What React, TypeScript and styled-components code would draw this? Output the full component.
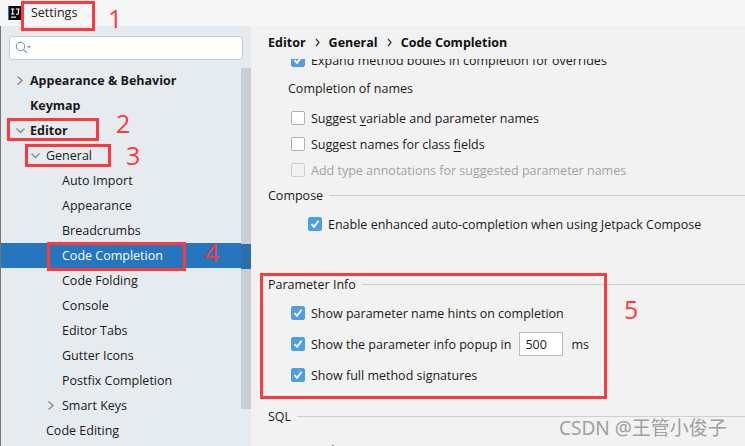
import React from "react";
import styled, { createGlobalStyle } from "styled-components";

const Global = createGlobalStyle`
  html, body { margin: 0; padding: 0; background: #f2f2f2; }
  #root { width: 745px; height: 446px; overflow: hidden; }
  * { box-sizing: border-box; }
`;

const font = `"Open Sans", "Noto Sans", "Noto Sans CJK SC", sans-serif`;

const Win = styled.div`
  position: relative; width: 745px; height: 446px; overflow: hidden;
  display: flex; flex-direction: column;
  font-family: ${font}; font-size: 12.5px; color: #1a1a1a; background: #f2f2f2;
`;
const TitleBar = styled.div`
  height: 26px; flex: none; display: flex; align-items: center; gap: 9px; padding-left: 8px;
  background: #f6f6f6;
`;
const TitleText = styled.span`color: #222; margin-bottom: 1px;`;
const Body = styled.div`flex: 1; display: flex; min-height: 0;`;

const Side = styled.aside`
  width: 251px; flex: none; background: #e6ebf0; border-left: 1px solid #777;
  padding: 10px 0 0; display: flex; flex-direction: column; position: relative;
`;
const Search = styled.div`
  width: 234px; height: 24px; margin-left: 8px; flex: none; background: #fff;
  border: 1px solid #c9ccd0; border-radius: 3px; display: flex; align-items: center; padding-left: 5px;
`;
const Tree = styled.div`margin-top: 8px; display: flex; flex-direction: column;`;
const Row = styled.div<{ $indent: number; $sel?: boolean; $bold?: boolean }>`
  height: 25px; flex: none; display: flex; align-items: center; position: relative;
  padding-left: ${p => p.$indent}px;
  background: ${p => (p.$sel ? "#2675bf" : "transparent")};
  color: ${p => (p.$sel ? "#fff" : "#1a1a1a")};
  font-weight: ${p => (p.$bold ? 700 : 400)};
`;
const Arrow = styled.svg<{ $left: number }>`
  position: absolute; left: ${p => p.$left}px; top: 8px; width: 9px; height: 9px;
  fill: none; stroke: #8a8a8a; stroke-width: 1.4;
`;
const ScrollThumb = styled.div`
  position: absolute; left: 240px; top: 42px; width: 10px; height: 341px; background: #c9ced4;
`;
const SelOverlay = styled.div`
  position: absolute; left: 240px; top: 218px; width: 10px; height: 25px; background: #2d6fae;
`;

const Main = styled.main`flex: 1; display: flex; flex-direction: column; padding-left: 17px; min-width: 0;`;
const Crumbs = styled.div`
  height: 33px; flex: none; display: flex; align-items: center; gap: 7px; font-weight: 700; color: #111;
`;
const Sep = styled.svg`width: 7px; height: 9px; fill: none; stroke: #333; stroke-width: 1.2; margin: 0 1px;`;
const Content = styled.div`position: relative; flex: 1; overflow: hidden;`;
const Clip = styled.div`margin-top: -7px; display: flex; flex-direction: column;`;

const CheckRow = styled.div<{ $indent: number; $h?: number; $mt?: number; $dis?: boolean }>`
  height: ${p => p.$h ?? 20}px; flex: none; display: flex; align-items: center; gap: 6px;
  margin-top: ${p => p.$mt ?? 0}px;
  padding-left: ${p => p.$indent}px; color: ${p => (p.$dis ? "#a3a3a3" : "#1a1a1a")};
`;
const Box = styled.span<{ $on?: boolean; $dis?: boolean }>`
  width: 14px; height: 14px; flex: none; border-radius: 2px; display: flex; align-items: center; justify-content: center;
  background: ${p => (p.$on ? "#4f9ee3" : p.$dis ? "#f2f2f2" : "#fff")};
  border: 1px solid ${p => (p.$on ? "#4f9ee3" : p.$dis ? "#d0d0d0" : "#b0b0b0")};
`;
const Plain = styled.div<{ $indent: number; $mt: number }>`
  height: 20px; flex: none; display: flex; align-items: center; padding-left: ${p => p.$indent}px;
  margin-top: ${p => p.$mt}px;
`;
const SectionHead = styled.div<{ $mt: number }>`
  height: 20px; flex: none; display: flex; align-items: center; gap: 6px; margin-top: ${p => p.$mt}px;
  &::after { content: ""; flex: 1; height: 1px; background: #cfcfcf; }
`;
const NumInput = styled.span`
  width: 44px; height: 24px; background: #fff; border: 1px solid #bdbdbd; display: inline-flex; align-items: center;
  padding-left: 5px; margin-left: 2px; margin-right: 2px; flex: none;
`;
const U = styled.span`text-decoration: underline; text-underline-offset: 2px;`;

const Mark = styled.div<{ $x: number; $y: number; $w: number; $h: number }>`
  position: absolute; left: ${p => p.$x}px; top: ${p => p.$y}px; width: ${p => p.$w}px; height: ${p => p.$h}px;
  border: 3px solid #fb3a3d;
`;
const Num = styled.span<{ $x: number; $y: number }>`
  position: absolute; left: ${p => p.$x}px; top: ${p => p.$y}px; color: #fb3a3d; font-size: 25px; line-height: 30px;
  font-family: "Open Sans", sans-serif;
`;
const Watermark = styled.span`
  position: absolute; left: 559px; top: 415px; font-size: 19px; line-height: 26px; color: #a0a0a0;
  font-family: "Noto Sans", "Noto Sans CJK SC", sans-serif; white-space: nowrap;
`;

const Check = () => (
  <svg width="10" height="10" viewBox="0 0 10 10" fill="none" stroke="#fff" strokeWidth="1.8">
    <path d="M1.5 5.2 L4 7.8 L8.6 1.8" />
  </svg>
);
const C = ({ on, dis }: { on?: boolean; dis?: boolean }) => <Box $on={on} $dis={dis}>{on && <Check />}</Box>;
const Down = ({ left }: { left: number }) => <Arrow $left={left} viewBox="0 0 9 9"><path d="M.5 2.5 L4.5 6.5 L8.5 2.5" /></Arrow>;
const Right = ({ left }: { left: number }) => <Arrow $left={left} viewBox="0 0 9 9"><path d="M2.5 .5 L7 4.5 L2.5 8.5" /></Arrow>;
const Chev = () => <Sep viewBox="0 0 7 9"><path d="M2 1 L5 4.5 L2 8" /></Sep>;

export default function App() {
  return (
    <Win>
      <Global />
      <TitleBar>
        <svg width="14" height="14" viewBox="0 0 14 14">
          <rect width="14" height="14" fill="#1c7fd6" />
          <rect x="1" y="0" width="13" height="14" fill="#0c0c0c" />
          <path d="M3 3h3.4M4.7 3v5M3 8h3.4M8 3h3.6M10.4 3v4.2a1 1 0 0 1-1 1H8" stroke="#fff" strokeWidth="1.1" fill="none" />
          <rect x="3" y="10.6" width="5" height="1.1" fill="#fff" />
        </svg>
        <TitleText>Settings</TitleText>
      </TitleBar>
      <Body>
        <Side>
          <Search>
            <svg width="16" height="14" viewBox="0 0 16 14" fill="none" stroke="#8f9397" strokeWidth="1.1">
              <circle cx="5.5" cy="5.5" r="4.2" />
              <path d="M8.6 8.6 L12 12" />
              <path d="M12 5 h4 l-2 2.2z" fill="#8f9397" stroke="none" />
            </svg>
          </Search>
          <Tree>
            <Row $indent={29} $bold><Right left={14} />Appearance &amp; Behavior</Row>
            <Row $indent={29} $bold>Keymap</Row>
            <Row $indent={29} $bold><Down left={15} />Editor</Row>
            <Row $indent={45}><Down left={30} />General</Row>
            <Row $indent={61}>Auto Import</Row>
            <Row $indent={61}>Appearance</Row>
            <Row $indent={61}>Breadcrumbs</Row>
            <Row $indent={61} $sel>Code Completion</Row>
            <Row $indent={61}>Code Folding</Row>
            <Row $indent={61}>Console</Row>
            <Row $indent={61}>Editor Tabs</Row>
            <Row $indent={61}>Gutter Icons</Row>
            <Row $indent={61}>Postfix Completion</Row>
            <Row $indent={61}><Right left={45} />Smart Keys</Row>
            <Row $indent={45}>Code Editing</Row>
          </Tree>
          <ScrollThumb />
          <SelOverlay />
        </Side>
        <Main>
          <Crumbs>Editor<Chev />General<Chev />Code Completion</Crumbs>
          <Content>
            <Clip>
              <CheckRow $indent={23} $h={16}><C on />Expand method bodies in completion for overrides</CheckRow>
              <Plain $indent={20} $mt={10}>Completion of names</Plain>
              <CheckRow $indent={23} $mt={10}><C /><span>Suggest <U>v</U>ariable and parameter names</span></CheckRow>
              <CheckRow $indent={23} $mt={6}><C /><span>Suggest names for class <U>f</U>ields</span></CheckRow>
              <CheckRow $indent={23} $mt={6} $dis><C dis />Add type annotations for suggested parameter names</CheckRow>
              <SectionHead $mt={5}>Compose</SectionHead>
              <CheckRow $indent={40} $mt={9}><C on />Enable enhanced auto-completion when using Jetpack Compose</CheckRow>
              <SectionHead $mt={40}>Parameter Info</SectionHead>
              <CheckRow $indent={23} $mt={9}><C on />Show parameter name hints on completion</CheckRow>
              <CheckRow $indent={23} $mt={9} $h={24}><C on />Show the parameter info popup in<NumInput>500</NumInput>ms</CheckRow>
              <CheckRow $indent={23} $mt={9}><C on />Show full method signatures</CheckRow>
              <SectionHead $mt={21}>SQL</SectionHead>
              <Plain $indent={23} $mt={14}>JPA/Hql</Plain>
            </Clip>
          </Content>
        </Main>
      </Body>
      <Mark $x={21} $y={1} $w={74} $h={30} />
      <Num $x={108} $y={3}>1</Num>
      <Mark $x={7} $y={118} $w={92} $h={23} />
      <Num $x={116} $y={108}>2</Num>
      <Mark $x={25} $y={144} $w={86} $h={23} />
      <Num $x={126} $y={140}>3</Num>
      <Mark $x={47} $y={242} $w={139} $h={29} />
      <Num $x={205} $y={237}>4</Num>
      <Mark $x={260} $y={273} $w={347} $h={126} />
      <Num $x={624} $y={294}>5</Num>
      <Watermark>CSDN @王管小俊子</Watermark>
    </Win>
  );
}
